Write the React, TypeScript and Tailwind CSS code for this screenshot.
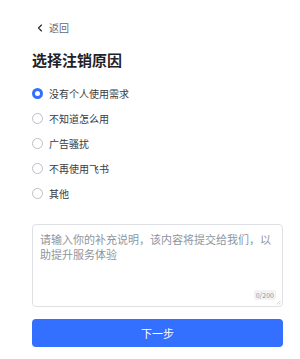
import { useState } from 'react'

const reasons = ['没有个人使用需求', '不知道怎么用', '广告骚扰', '不再使用飞书', '其他']

export default function App() {
  const [selected, setSelected] = useState(0)
  const [text, setText] = useState('')

  return <div className="w-[300px] h-[359px] bg-white pl-[32px] pr-[17px] pt-[22px] font-['Noto_Sans_CJK_SC',sans-serif]">
    <button type="button" className="flex items-center h-[12px] gap-[5px] text-[10px] text-[#646a73]">
      <svg width="8" height="8" viewBox="0 0 8 8" fill="none" className="ml-[4px]"><path d="M5.5 1 L2.5 4 L5.5 7" stroke="#1f2329" strokeWidth="1.1" strokeLinecap="round" strokeLinejoin="round" /></svg>
      <span className="leading-[12px]">返回</span>
    </button>
    <h1 className="mt-[16px] text-[15px] leading-[20px] font-bold text-[#1f2329]">选择注销原因</h1>
    <div className="mt-[11px] flex flex-col">
      {reasons.map((reason, index) => <label key={reason} onClick={() => setSelected(index)} className="flex items-center h-[25px] gap-[6px] cursor-pointer">
        {selected === index
          ? <span className="w-[11px] h-[11px] rounded-full border-[3px] border-[#3370ff] bg-white" />
          : <span className="w-[11px] h-[11px] rounded-full border border-[#bbbfc4] bg-white" />}
        <span className="text-[10px] leading-[14px] text-[#373c43]">{reason}</span>
      </label>)}
    </div>
    <div className="relative mt-[18px] h-[83px] border border-[#dee0e3] rounded-[4px]">
      <textarea value={text} onChange={event => setText(event.target.value.slice(0, 200))} placeholder="请输入你的补充说明，该内容将提交给我们，以助提升服务体验" className="w-full h-full resize-none px-[7px] py-[7px] text-[11px] leading-[15px] text-[#1f2329] placeholder:text-[#8f959e] outline-none bg-transparent" />
      <span className="absolute right-[6px] bottom-[6px] px-[2px] bg-[#f2f3f5] rounded-[2px] text-[7px] leading-[10px] text-[#8f959e]">{text.length}/200</span>
      <svg width="5" height="5" viewBox="0 0 5 5" className="absolute right-[1px] bottom-[1px]"><path d="M4.5 0.5 L0.5 4.5 M4.5 2.5 L2.5 4.5" stroke="#bbbfc4" strokeWidth="0.6" /></svg>
    </div>
    <button type="button" className="mt-[12px] w-full h-[28px] rounded-[4px] bg-[#3370ff] text-white text-[11px]">下一步</button>
  </div>
}
